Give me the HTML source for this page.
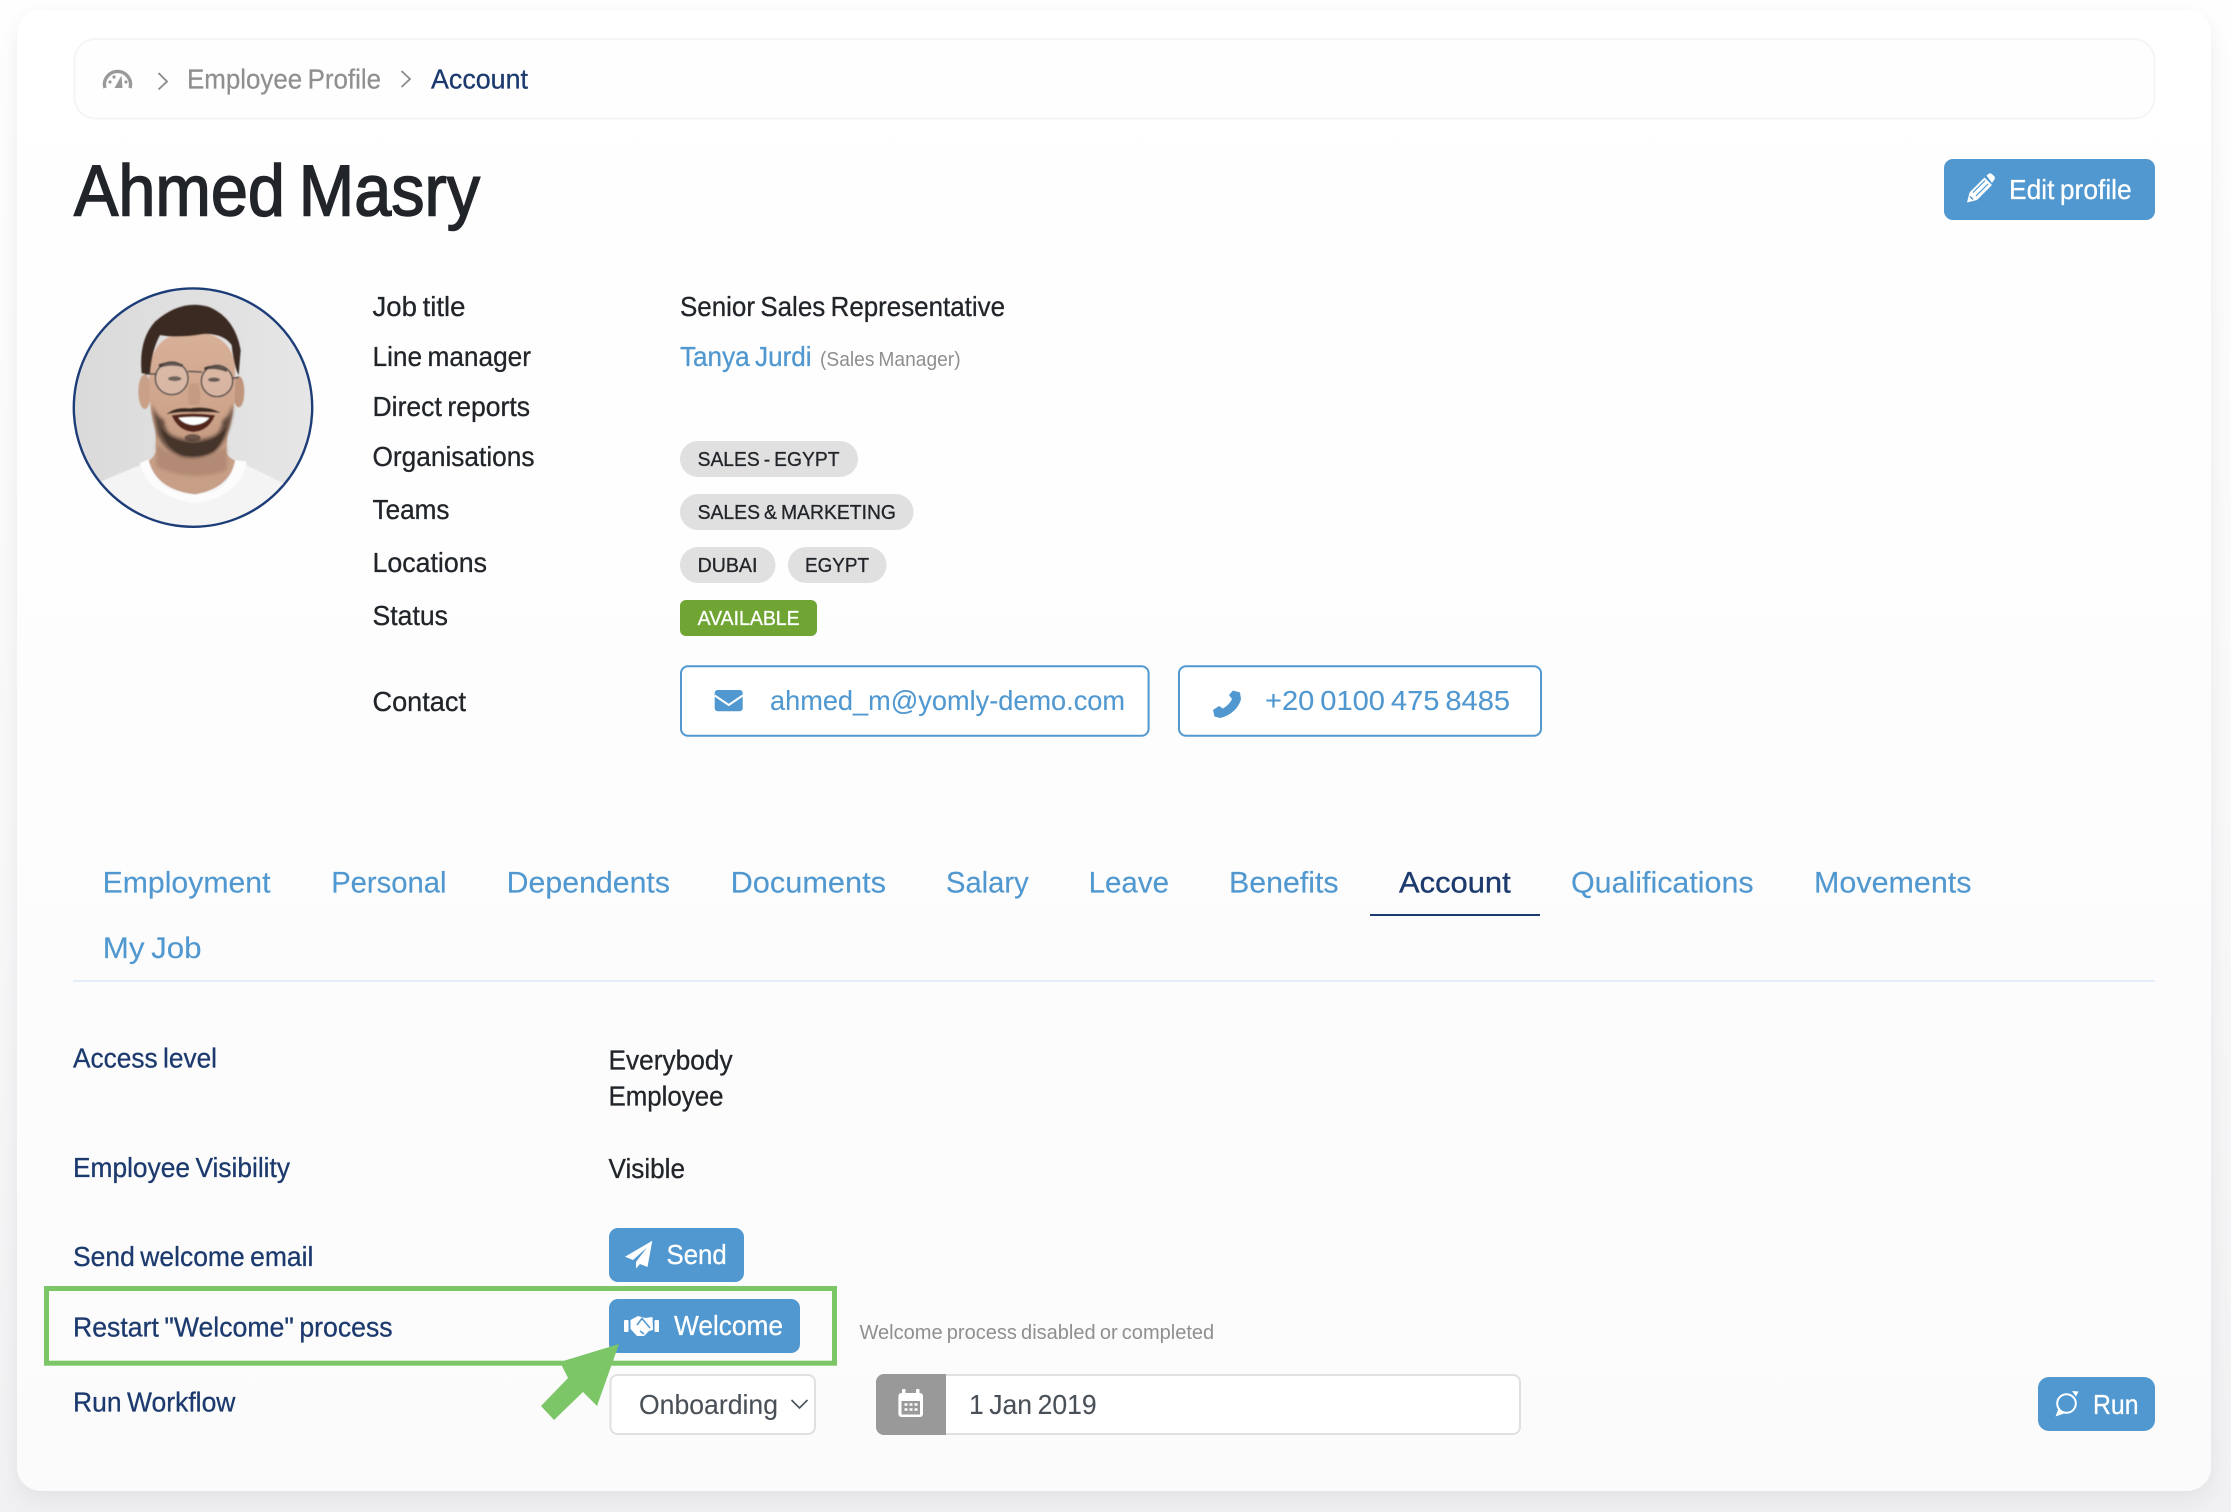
<!DOCTYPE html>
<html lang="en"><head><meta charset="utf-8"><title>Ahmed Masry</title>
<style>
html,body{margin:0;padding:0;width:2231px;height:1512px;overflow:hidden;background:#fbfbfc}
#bg{position:absolute;left:0;top:0;width:2231px;height:1512px;background:linear-gradient(#fefefe 0,#f8f8f9 60%,#f1f1f3 100%)}
#card{position:absolute;left:17px;top:10px;width:2194px;height:1481px;border-radius:24px;background:linear-gradient(#fff 0,#fdfdfd 50%,#fbfbfb 100%);box-shadow:0 12px 24px rgba(30,35,60,.055),0 0 18px rgba(30,35,60,.02)}
svg{position:absolute;left:0;top:0}
text{font-family:"Liberation Sans",Arial,sans-serif;font-size:28px;fill:#212529;stroke:#212529;stroke-width:.3;paint-order:stroke;word-spacing:-.07em}
.b{fill:#5098cf;stroke:#5098cf}
.n{fill:#1c3a6e;stroke:#1c3a6e}
.g{fill:#8f8f8f;stroke:none}
.w{fill:#fff;stroke:#fff}
.s{font-size:20.5px}
.t{font-size:30px;stroke-width:.15}
.i{fill:#495057;stroke:#495057}
</style></head><body>
<div id="bg"></div><div id="card"></div>
<svg width="2231" height="1512" viewBox="0 0 2231 1512" xmlns="http://www.w3.org/2000/svg">
<defs>
<clipPath id="av"><circle cx="193" cy="407.6" r="119"/></clipPath>
<filter id="bl" x="-5%" y="-5%" width="110%" height="110%"><feGaussianBlur stdDeviation="1.6"/></filter>
<filter id="bl2" x="-20%" y="-20%" width="140%" height="140%"><feGaussianBlur stdDeviation="5"/></filter>
<linearGradient id="ag" x1="0" y1="0" x2="1" y2="0"><stop offset="0" stop-color="#dadada"/><stop offset="1" stop-color="#e6e6e6"/></linearGradient>
<linearGradient id="sk" x1="0" y1="0" x2="0" y2="1"><stop offset="0" stop-color="#d9b199"/><stop offset=".6" stop-color="#cfa58c"/><stop offset="1" stop-color="#c0967e"/></linearGradient>
</defs>

<!-- breadcrumb -->
<rect x="74.5" y="39" width="2080" height="79.5" rx="21" fill="#fefefe" stroke="#f5f5f5" stroke-width="2"/>
<path d="M105 88A13 13 0 1 1 130 88" fill="none" stroke="#999" stroke-width="3.4"/>
<path d="M114.5 88L121.5 75.5L122.5 88Z" fill="#999"/>
<circle cx="110" cy="82" r="1.6" fill="#999"/><circle cx="114" cy="77" r="1.6" fill="#999"/><circle cx="126" cy="82" r="1.6" fill="#999"/>
<path d="M158.5 73L167 81.5L158.5 89.5" fill="none" stroke="#8a8a8a" stroke-width="1.8"/>
<text x="187" y="88.5" textLength="194" lengthAdjust="spacingAndGlyphs" class="g" style="stroke:#8f8f8f;stroke-width:.25">Employee Profile</text>
<path d="M401.5 71L410 79L401.5 87" fill="none" stroke="#8a8a8a" stroke-width="1.8"/>
<text x="431" y="88.5" textLength="97" lengthAdjust="spacingAndGlyphs" class="n">Account</text>

<!-- title -->
<text x="74" y="215.5" textLength="406" lengthAdjust="spacingAndGlyphs" style="font-size:72px;stroke-width:1.5">Ahmed Masry</text>

<!-- edit -->
<rect x="1944" y="159" width="211" height="61" rx="9" fill="#5098cf"/>
<path d="M1967 202.5L1969.5 192.5L1984.5 177.5L1992 185L1977 200Z" fill="#fff"/>
<path d="M1986.5 175.5L1989 173.5Q1991 173 1992.5 174.5L1994.5 176.5Q1995.5 178.5 1994 180L1992 183Z" fill="#fff"/>
<path d="M1973 192.5L1985 180.5M1976 196L1988 184" stroke="#5098cf" stroke-width="1.2"/>
<path d="M1970 196.5L1973 199.5" stroke="#5098cf" stroke-width="1.5"/>
<text x="2009" y="199" textLength="122.7" lengthAdjust="spacingAndGlyphs" class="w">Edit profile</text>

<!-- avatar -->
<g clip-path="url(#av)">
<circle cx="193" cy="407.6" r="120" fill="url(#ag)"/>
<g transform="translate(50 270) scale(.3333)" filter="url(#bl)">
<path d="M140 640Q220 605 285 580L575 578Q640 610 720 650L720 800L140 800Z" fill="#f4f4f4"/>
<path d="M270 578Q285 670 430 700Q575 680 590 575L555 570Q545 670 430 675Q310 665 298 568Z" fill="#fcfcfc"/>
<path d="M316 480L318 545Q310 565 296 572Q320 660 435 673Q540 655 555 572Q530 560 530 545L533 480Z" fill="#c79f87"/>
<path d="M318 520Q420 610 530 530L530 600Q430 640 320 590Z" fill="#a27a65" opacity=".55" filter="url(#bl2)"/>
<ellipse cx="284" cy="365" rx="19" ry="52" fill="#c9a088"/>
<ellipse cx="566" cy="365" rx="17" ry="47" fill="#bf957d"/>
<path d="M298 300Q296 400 308 450Q325 530 375 555Q425 570 480 553Q530 525 545 450Q558 390 555 290Q545 190 430 185Q310 185 298 300Z" fill="url(#sk)"/>
<path d="M305 400Q312 445 322 490Q345 545 400 562Q450 570 490 548Q528 520 543 450Q550 425 549 400Q540 440 518 450Q515 490 485 500Q430 520 375 500Q345 490 342 450Q318 440 305 400Z" fill="#4d3b32" opacity=".85" filter="url(#bl2)"/>
<path d="M330 470Q350 540 400 556Q450 565 490 544Q518 520 530 470Q500 515 430 520Q360 515 330 470Z" fill="#3d2e27" opacity=".75"/>
<ellipse cx="428" cy="503" rx="24" ry="11" fill="#4a3830" opacity=".7"/>
<path d="M350 432Q375 410 420 415Q470 406 512 428Q470 424 430 426Q390 424 350 432Z" fill="#3a2a23"/>
<path d="M365 436Q430 426 495 436Q476 483 430 486Q385 483 365 436Z" fill="#52271d"/>
<path d="M385 443Q430 438 478 443Q464 463 430 465Q400 463 385 443Z" fill="#fff"/>
<path d="M275 310Q265 210 315 155Q395 85 480 112Q555 145 572 240L566 315Q552 290 545 225Q520 190 460 192Q385 205 330 195Q305 240 300 312Z" fill="#3a2a23"/>
<path d="M326 283Q360 270 398 283L398 291Q360 282 328 294Z" fill="#3f2e26"/>
<path d="M463 292Q495 280 532 298L530 306Q495 292 463 300Z" fill="#3f2e26"/>
<ellipse cx="374" cy="326" rx="20" ry="7" fill="#4a3a32"/><ellipse cx="492" cy="329" rx="18" ry="6.5" fill="#4a3a32"/>
<path d="M418 340Q408 385 420 405L445 405Q456 385 446 340Z" fill="#b98f78" opacity=".45"/>
<circle cx="365" cy="325" r="49" fill="#f2f2f2" fill-opacity=".22" stroke="#444" stroke-width="4"/>
<circle cx="501" cy="333" r="47" fill="#f2f2f2" fill-opacity=".18" stroke="#444" stroke-width="4"/>
<path d="M414 304L455 306M285 312L320 312M547 325L566 322" stroke="#444" stroke-width="4" fill="none"/>
</g></g>
<circle cx="193" cy="407.6" r="119.2" fill="none" stroke="#1c3d78" stroke-width="2.4"/>

<!-- labels -->
<text x="372.5" y="316" textLength="93" lengthAdjust="spacingAndGlyphs">Job title</text>
<text x="372.5" y="366" textLength="158.5" lengthAdjust="spacingAndGlyphs">Line manager</text>
<text x="372.5" y="416" textLength="157.5" lengthAdjust="spacingAndGlyphs">Direct reports</text>
<text x="372.5" y="466" textLength="162" lengthAdjust="spacingAndGlyphs">Organisations</text>
<text x="372.5" y="519" textLength="77" lengthAdjust="spacingAndGlyphs">Teams</text>
<text x="372.5" y="572" textLength="114.5" lengthAdjust="spacingAndGlyphs">Locations</text>
<text x="372.5" y="625" textLength="75.5" lengthAdjust="spacingAndGlyphs">Status</text>
<text x="372.5" y="711" textLength="93.5" lengthAdjust="spacingAndGlyphs">Contact</text>

<text x="680" y="316" textLength="325" lengthAdjust="spacingAndGlyphs">Senior Sales Representative</text>
<text x="680" y="366" textLength="131.6" lengthAdjust="spacingAndGlyphs" class="b">Tanya Jurdi</text>
<text x="820" y="366" textLength="140.6" lengthAdjust="spacingAndGlyphs" class="g s">(Sales Manager)</text>

<rect x="680" y="441" width="178" height="36" rx="18" fill="#e0e0e0"/>
<text x="697.6" y="466" textLength="141.9" lengthAdjust="spacingAndGlyphs" class="s">SALES - EGYPT</text>
<rect x="680" y="494" width="233.6" height="36" rx="18" fill="#e0e0e0"/>
<text x="697.6" y="519" textLength="198.4" lengthAdjust="spacingAndGlyphs" class="s">SALES &amp; MARKETING</text>
<rect x="680" y="547" width="95.5" height="36" rx="18" fill="#e0e0e0"/>
<text x="697.6" y="572" textLength="59.8" lengthAdjust="spacingAndGlyphs" class="s">DUBAI</text>
<rect x="788" y="547" width="98.5" height="36" rx="18" fill="#e0e0e0"/>
<text x="805" y="572" textLength="64" lengthAdjust="spacingAndGlyphs" class="s">EGYPT</text>
<rect x="680" y="600" width="137" height="36" rx="6" fill="#70a534"/>
<text x="697.6" y="625" textLength="102" lengthAdjust="spacingAndGlyphs" class="s w">AVAILABLE</text>

<!-- contact -->
<rect x="681" y="666.3" width="467.6" height="69.4" rx="7" fill="#fff" stroke="#5098cf" stroke-width="2"/>
<rect x="714.7" y="690" width="28" height="21.3" rx="3" fill="#5098cf"/>
<path d="M714.7 695.5L728.7 705L742.7 695.5" fill="none" stroke="#fff" stroke-width="2"/>
<text x="770" y="710" textLength="355" lengthAdjust="spacingAndGlyphs" class="b" style="stroke-width:.1">ahmed_m@yomly-demo.com</text>
<rect x="1179" y="666.3" width="362" height="69.4" rx="7" fill="#fff" stroke="#5098cf" stroke-width="2"/>
<path d="M1233 690.5L1240 692.5L1241 699C1239 708 1230 716 1220 718L1214.5 716.5L1213 710L1219 706L1223 708.5C1227 706 1230 703 1232 699L1229 695Z" fill="#5098cf"/>
<text x="1265" y="710" textLength="245" lengthAdjust="spacingAndGlyphs" class="b" style="stroke-width:.1">+20 0100 475 8485</text>

<!-- tabs -->
<text x="102.6" y="892.3" textLength="167.9" lengthAdjust="spacingAndGlyphs" class="b t">Employment</text>
<text x="331.2" y="892.3" textLength="115.3" lengthAdjust="spacingAndGlyphs" class="b t">Personal</text>
<text x="506.7" y="892.3" textLength="163.3" lengthAdjust="spacingAndGlyphs" class="b t">Dependents</text>
<text x="730.6" y="892.3" textLength="155.4" lengthAdjust="spacingAndGlyphs" class="b t">Documents</text>
<text x="946" y="892.3" textLength="82.7" lengthAdjust="spacingAndGlyphs" class="b t">Salary</text>
<text x="1088.6" y="892.3" textLength="80.4" lengthAdjust="spacingAndGlyphs" class="b t">Leave</text>
<text x="1229" y="892.3" textLength="109.6" lengthAdjust="spacingAndGlyphs" class="b t">Benefits</text>
<text x="1399" y="892.3" textLength="111.7" lengthAdjust="spacingAndGlyphs" class="n t" style="stroke-width:.35">Account</text>
<rect x="1370" y="914" width="170" height="2" fill="#1c3a6e"/>
<text x="1571" y="892.3" textLength="182.6" lengthAdjust="spacingAndGlyphs" class="b t">Qualifications</text>
<text x="1814" y="892.3" textLength="157.5" lengthAdjust="spacingAndGlyphs" class="b t">Movements</text>
<text x="102.8" y="958" textLength="98.8" lengthAdjust="spacingAndGlyphs" class="b t">My Job</text>
<rect x="73" y="980" width="2082" height="2" fill="#e3eef8"/>

<!-- rows -->
<text x="73" y="1067.7" textLength="144" lengthAdjust="spacingAndGlyphs" class="n">Access level</text>
<text x="608.5" y="1069.7" textLength="124.1" lengthAdjust="spacingAndGlyphs">Everybody</text>
<text x="608.5" y="1105.7" textLength="115" lengthAdjust="spacingAndGlyphs">Employee</text>
<text x="73" y="1177" textLength="217" lengthAdjust="spacingAndGlyphs" class="n">Employee Visibility</text>
<text x="608.5" y="1178" textLength="76.5" lengthAdjust="spacingAndGlyphs">Visible</text>
<text x="73" y="1266" textLength="240.4" lengthAdjust="spacingAndGlyphs" class="n">Send welcome email</text>
<text x="73" y="1336.7" textLength="319.6" lengthAdjust="spacingAndGlyphs" class="n">Restart "Welcome" process</text>
<text x="73" y="1411.7" textLength="162.4" lengthAdjust="spacingAndGlyphs" class="n">Run Workflow</text>

<!-- send -->
<rect x="609" y="1228" width="135" height="54" rx="9" fill="#5098cf"/>
<path d="M652.3 1240.7L625 1256.7L633 1260L647 1247.5L636 1262L636 1268.5L640 1264L647.5 1267Z" fill="#fff"/>
<text x="666.5" y="1264" textLength="60.2" lengthAdjust="spacingAndGlyphs" class="w">Send</text>

<!-- welcome -->
<rect x="609" y="1299" width="191" height="54" rx="9" fill="#5098cf"/>
<rect x="624" y="1320" width="4.5" height="12" rx="1" fill="#fff"/><rect x="654.5" y="1320" width="4.5" height="12" rx="1" fill="#fff"/>
<path d="M630.5 1320L638 1316L645 1318L652.5 1317L653 1330L649 1331L644 1336L637 1336L630.5 1329Z" fill="#fff"/>
<path d="M637 1325L642 1318.5L650 1328M640 1331L644 1334" fill="none" stroke="#5098cf" stroke-width="1.6"/>
<text x="674" y="1335" textLength="109" lengthAdjust="spacingAndGlyphs" class="w">Welcome</text>
<text x="859.5" y="1339" textLength="354.7" lengthAdjust="spacingAndGlyphs" class="g s">Welcome process disabled or completed</text>

<!-- highlight -->
<rect x="46.5" y="1288.5" width="788" height="74.7" fill="none" stroke="#7dc667" stroke-width="5"/>
<path d="M619 1344L597 1406L583 1392L554 1420L541 1406L568 1378L560 1362Z" fill="#7dc667"/>

<!-- select -->
<rect x="610.5" y="1375" width="204.5" height="59" rx="7" fill="#fff" stroke="#e0e0e0" stroke-width="2"/>
<text x="639" y="1414" textLength="139" lengthAdjust="spacingAndGlyphs" class="i" style="stroke-width:.1">Onboarding</text>
<path d="M791.5 1400L799.5 1408L807.5 1400" fill="none" stroke="#495057" stroke-width="1.6"/>

<!-- date -->
<rect x="877" y="1375" width="643" height="59" rx="7" fill="#fff" stroke="#e0e0e0" stroke-width="2"/>
<path d="M946 1374V1435H884a8 8 0 0 1-8-8V1382a8 8 0 0 1 8-8Z" fill="#999"/>
<rect x="898.4" y="1393" width="24.6" height="24" rx="3" fill="#fff"/>
<rect x="902" y="1389" width="3.5" height="7" rx="1" fill="#fff"/><rect x="916" y="1389" width="3.5" height="7" rx="1" fill="#fff"/>
<rect x="901.5" y="1401" width="18.5" height="13.5" fill="#999"/>
<path d="M904.5 1404.5h3M909.5 1404.5h3M914.5 1404.5h3M904.5 1409.5h3M909.5 1409.5h3M914.5 1409.5h3" stroke="#fff" stroke-width="2.4"/>
<text x="969" y="1414" textLength="127.6" lengthAdjust="spacingAndGlyphs" class="i" style="stroke-width:.1">1 Jan 2019</text>

<!-- run -->
<rect x="2038" y="1377" width="117" height="54" rx="11" fill="#5098cf"/>
<circle cx="2066.5" cy="1403.5" r="9.3" fill="none" stroke="#fff" stroke-width="2"/>
<path d="M2055.5 1416.5L2058.5 1408.5L2064 1413.5Z" fill="#fff"/>
<path d="M2072 1391L2078.5 1391.5L2076 1396.5Z" fill="#fff"/>
<text x="2093" y="1414" textLength="45.5" lengthAdjust="spacingAndGlyphs" class="w">Run</text>
</svg>
</body></html>
